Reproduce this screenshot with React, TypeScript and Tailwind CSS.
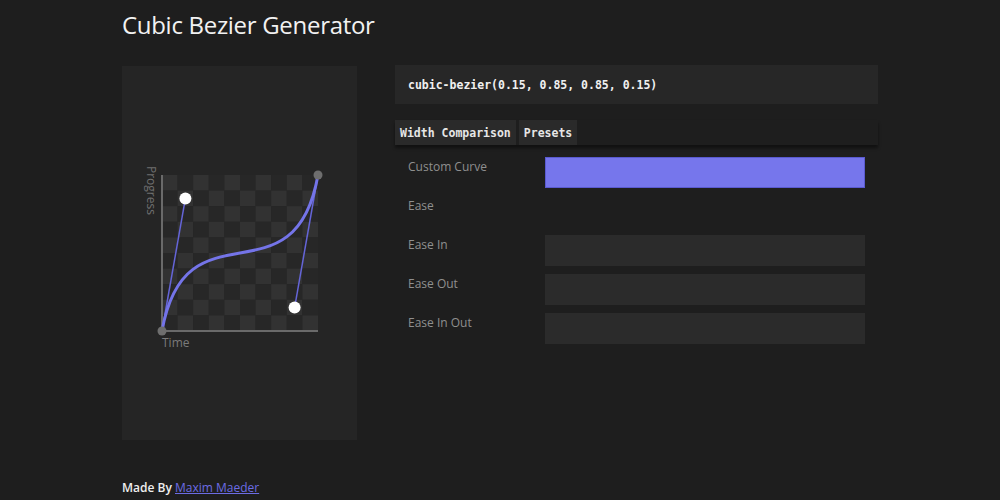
import React from 'react';

const P1 = { x: 0.15, y: 0.85 };
const P2 = { x: 0.85, y: 0.15 };

const rows = [
    { label: 'Custom Curve', width: 100, active: true },
    { label: 'Ease', width: 0, active: false },
    { label: 'Ease In', width: 100, active: false },
    { label: 'Ease Out', width: 100, active: false },
    { label: 'Ease In Out', width: 100, active: false },
];

const Graph: React.FC = () => {
    const s = 156;
    const ox = 22;
    const oy = 178;
    const px = (v: number) => ox + v * s;
    const py = (v: number) => oy - v * s;
    const cells = [];
    for (let r = 0; r < 10; r++) {
        for (let c = 0; c < 10; c++) {
            cells.push(
                <rect
                    key={`${r}-${c}`}
                    x={ox + c * 15.6}
                    y={oy - s + r * 15.6}
                    width={15.6}
                    height={15.6}
                    fill={(r + c) % 2 === 0 ? '#323232' : '#272727'}
                />
            );
        }
    }
    return (
        <svg width="200" height="200" viewBox="0 0 200 200" style={{ fontFamily: '"Open Sans", sans-serif' }}>
            {cells}
            <text x="6.5" y="13" fontSize="12" fill="#6f6f6f" transform="rotate(90 6.5 13)">
                Progress
            </text>
            <text x="22" y="194" fontSize="12" fill="#7a7a7a">Time</text>
            <line x1={ox} y1={oy - s} x2={ox} y2={oy} stroke="#6a6a6a" strokeWidth="2" />
            <line x1={ox} y1={oy} x2={ox + s} y2={oy} stroke="#6a6a6a" strokeWidth="2" />
            <line x1={px(0)} y1={py(0)} x2={px(P1.x)} y2={py(P1.y)} stroke="#6565d8" strokeWidth="1.5" />
            <line x1={px(1)} y1={py(1)} x2={px(P2.x)} y2={py(P2.y)} stroke="#6565d8" strokeWidth="1.5" />
            <path
                d={`M ${px(0)} ${py(0)} C ${px(P1.x)} ${py(P1.y)}, ${px(P2.x)} ${py(P2.y)}, ${px(1)} ${py(1)}`}
                fill="none"
                stroke="#7474e8"
                strokeWidth="3"
            />
            <circle cx={px(0)} cy={py(0)} r="4.5" fill="#6e6e6e" />
            <circle cx={px(1)} cy={py(1)} r="4.5" fill="#6e6e6e" />
            <circle cx={px(P1.x)} cy={py(P1.y)} r="6" fill="#ffffff" />
            <circle cx={px(P2.x)} cy={py(P2.y)} r="6" fill="#ffffff" />
        </svg>
    );
};

const ComparisonRow: React.FC<{ label: string; width: number; active: boolean }> = ({ label, width, active }) => (
    <div className="flex items-start h-[31px]">
        <span className="w-[150px] pl-[13px] pt-[1px] text-[12px] leading-[17px] text-[#8f8f8f]">{label}</span>
        <div className="w-[320px] h-[31px]">
            {width > 0 && (
                <div
                    className={active ? 'h-full bg-[#7676ec] border border-[#5a5ad0]' : 'h-full bg-[#2b2b2b]'}
                    style={{ width: `${width}%` }}
                />
            )}
        </div>
    </div>
);

export default function App() {
    return (
        <div className="min-h-[500px] bg-[#1e1e1e] text-white" style={{ fontFamily: '"Open Sans", "Noto Sans", sans-serif' }}>
            <div className="w-[756px] mx-auto">
                <h1 className="pt-[8px] h-[65px] text-[24px] leading-[33px] text-[#f2f2f2] tracking-[-0.3px]">Cubic Bezier Generator</h1>
                <div className="flex gap-[38px]">
                    <div className="w-[235px] h-[374px] mt-[1px] bg-[#252525] flex items-center justify-center">
                        <Graph />
                    </div>
                    <div className="flex-1">
                        <div
                            className="h-[39px] bg-[#272727] flex items-center pt-[3px] px-[13px] text-[11.5px] font-bold text-[#f0f0f0]"
                            style={{ fontFamily: '"DejaVu Sans Mono", monospace' }}
                        >
                            cubic-bezier(0.15, 0.85, 0.85, 0.15)
                        </div>
                        <div
                            className="mt-[16px] flex gap-[3px] shadow-[0_3px_3px_rgba(0,0,0,0.45)] text-[11.5px] font-bold text-[#e6e6e6]"
                            style={{ fontFamily: '"DejaVu Sans Mono", monospace' }}
                        >
                            <button className="h-[25px] px-[5px] pt-[2px] bg-[#2a2a2a]">Width Comparison</button>
                            <button className="h-[25px] px-[5px] pt-[2px] bg-[#2a2a2a]">Presets</button>
                        </div>
                        <div className="mt-[12px] flex flex-col gap-[8px]">
                            {rows.map(r => (
                                <ComparisonRow key={r.label} {...r} />
                            ))}
                        </div>
                    </div>
                </div>
                <p className="mt-[39px] text-[12px] font-semibold text-[#eeeeee]">
                    Made By{' '}
                    <a href="#" className="text-[#6c6ce4] underline font-normal">Maxim Maeder</a>
                </p>
            </div>
        </div>
    );
}
